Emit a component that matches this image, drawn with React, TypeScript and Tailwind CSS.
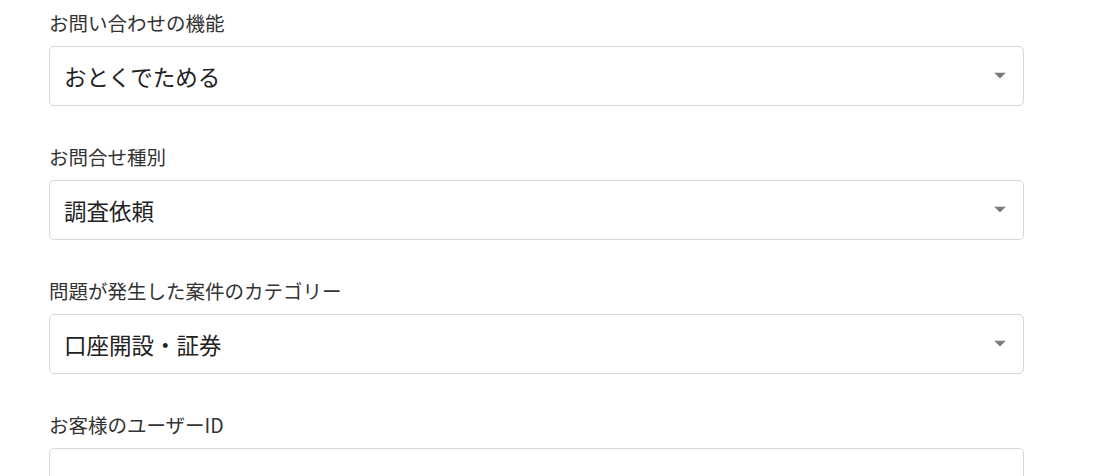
import React from 'react';

const fields = [
  { label: 'お問い合わせの機能', value: 'おとくでためる', select: true },
  { label: 'お問合せ種別', value: '調査依頼', select: true },
  { label: '問題が発生した案件のカテゴリー', value: '口座開設・証券', select: true },
  { label: 'お客様のユーザーID', value: '', select: false },
];

const Caret = () => (
  <svg width="12" height="7" viewBox="0 0 12 7" className="absolute right-[17px] top-1/2 -translate-y-1/2">
    <path d="M0 0 L12 0 L6 6 Z" fill="#7a7a7a" />
  </svg>
);

export default function App() {
  return (
    <div
      className="min-h-screen bg-white pt-[11px] pl-[49px] text-[#333]"
      style={{ fontFamily: '"Noto Sans CJK JP", "Noto Sans", sans-serif' }}
    >
      <div className="flex w-[975px] flex-col gap-[39px]">
        {fields.map((f) => (
          <div key={f.label} className="flex flex-col gap-[11px]">
            <label className="text-[19.5px] leading-[24px] text-[#333]">{f.label}</label>
            <div className="relative flex h-[60px] items-center rounded-[5px] border border-[#d6d6d6] pl-[14px] pr-[40px]">
              <span className="text-[22.5px] leading-[30px] text-[#222]">{f.value}</span>
              {f.select && <Caret />}
            </div>
          </div>
        ))}
      </div>
    </div>
  );
}
